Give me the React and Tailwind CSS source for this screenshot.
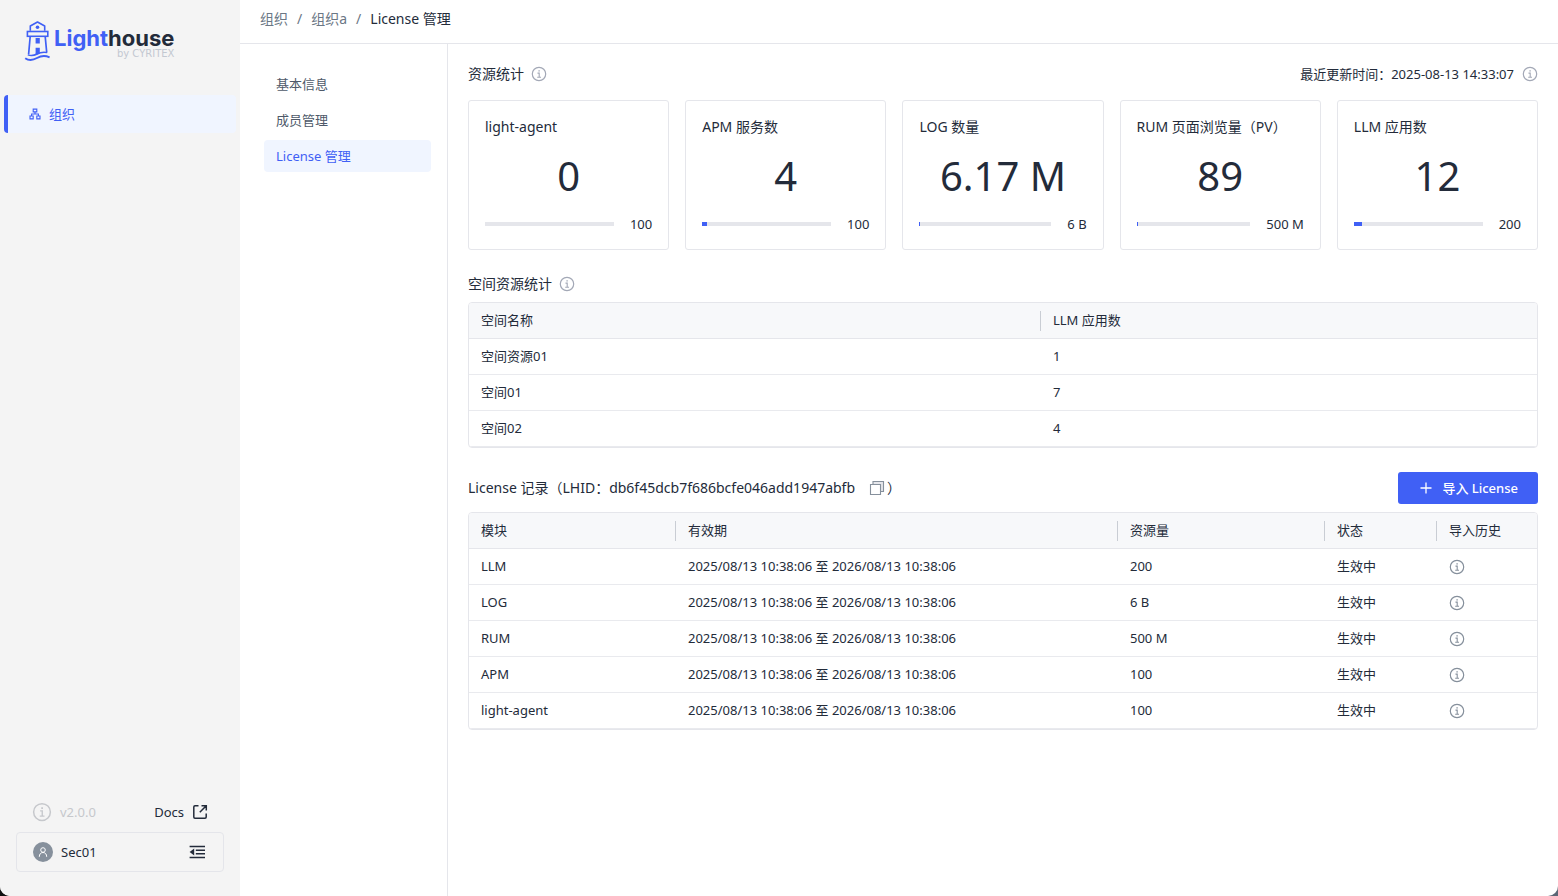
import { Fragment } from 'react';

const STATS = [
  { title: 'light-agent', value: '0', limit: '100', percent: 0 },
  { title: 'APM 服务数', value: '4', limit: '100', percent: 4 },
  { title: 'LOG 数量', value: '6.17 M', limit: '6 B', percent: 0.6 },
  { title: 'RUM 页面浏览量（PV）', value: '89', limit: '500 M', percent: 0.6 },
  { title: 'LLM 应用数', value: '12', limit: '200', percent: 6 },
];

const SPACES = [
  { name: '空间资源01', count: 1 },
  { name: '空间01', count: 7 },
  { name: '空间02', count: 4 },
];

const PERIOD = '2025/08/13 10:38:06 至 2026/08/13 10:38:06';

const LICENSES = [
  { module: 'LLM', amount: '200' },
  { module: 'LOG', amount: '6 B' },
  { module: 'RUM', amount: '500 M' },
  { module: 'APM', amount: '100' },
  { module: 'light-agent', amount: '100' },
];

const SUB_MENU = ['基本信息', '成员管理', 'License 管理'];

const InfoIcon = ({ className }) => (
  <svg viewBox="0 0 16 16" fill="none" stroke="currentColor" className={className} aria-hidden="true">
    <circle cx="8" cy="8" r="6.7" strokeWidth="1.2" />
    <path d="M6.5 7.1h1.7v4.2M6.2 11.3h3.8" strokeWidth="1.1" />
    <path d="M7.4 4.9h1.4" strokeWidth="1.4" />
  </svg>
);

const InfoButton = ({ label, className = 'text-[#a3a8b6]' }) => (
  <button type="button" aria-label={label} className={`block cursor-pointer ${className}`}>
    <InfoIcon className="size-4" />
  </button>
);

const LighthouseMark = () => (
  <svg viewBox="0 0 26 42" fill="none" stroke="#4060f5" className="h-[42px] w-[26px]" aria-hidden="true">
    <path d="M6.3 10.8V6L13.5 2l7.2 4v4.8" strokeWidth="1.6" strokeLinejoin="round" />
    <circle cx="13.5" cy="7.2" r="1.8" fill="#4060f5" stroke="none" />
    <rect x="3.4" y="11.5" width="20.4" height="4.8" strokeWidth="1.6" />
    <path d="M6.2 16.5 4.6 34.3M21.2 16.5l1.5 15.8" strokeWidth="1.7" />
    <path d="M11.6 18h4.2v5.5h-4.2zM11.6 27.8h4.2v5.8l-4.2 1.8z" fill="#4060f5" stroke="none" />
    <path d="M3.8 34.8c3.2 1.2 6.4.6 9.2-.8 3.2-1.6 6.2-2.2 10.2-1.4" strokeWidth="1.4" />
    <path d="M1.2 38.2c3.4 2.4 7.6 2.2 11.8-.2 4-2.3 8-2.7 12.6-.7" strokeWidth="2" />
  </svg>
);

const Logo = () => (
  <div className="flex items-start px-6 pt-5">
    <LighthouseMark />
    <div className="pt-2 pl-1">
      <div className="font-['Inter',sans-serif] text-[22px] leading-5 font-bold text-[#232b3a]">
        <span className="text-[#4060f5]">Light</span>house
      </div>
      <div className="text-right font-['DejaVu_Sans',sans-serif] text-[10px] leading-3 text-[#c3c8d1]">
        by CYRITEX
      </div>
    </div>
  </div>
);

const OrgIcon = () => (
  <svg viewBox="0 0 12 12" fill="none" stroke="currentColor" className="size-3" aria-hidden="true">
    <path d="M4.2 1.1h3.6v2.8H4.2zM1 8h3.2v2.9H1zM7.8 8H11v2.9H7.8zM6 4v2M2.6 8V6h6.8v2" strokeWidth="1.1" />
  </svg>
);

const Sidebar = () => (
  <aside className="flex w-60 shrink-0 flex-col bg-[#f4f4f4]">
    <Logo />
    <nav className="mt-[33px] px-1">
      <a
        href="#org"
        className="flex h-[38px] items-center gap-2 rounded-sm border-l-4 border-[#4060f5] bg-[#f0f5ff] pl-[21px] text-[#4060f5]"
      >
        <OrgIcon />
        组织
      </a>
    </nav>
    <div className="mt-auto px-4 pb-6">
      <div className="flex h-10 items-center justify-between px-4">
        <span className="flex items-center gap-2 text-[#c6c8cc]">
          <InfoIcon className="size-5" />
          v2.0.0
        </span>
        <a href="#docs" className="flex items-center gap-2">
          Docs
          <svg viewBox="0 0 16 16" fill="none" stroke="currentColor" strokeWidth="1.5" className="size-4" aria-hidden="true">
            <path d="M6.5 1.7H3a1.2 1.2 0 0 0-1.2 1.2V13A1.2 1.2 0 0 0 3 14.2h10a1.2 1.2 0 0 0 1.2-1.2V9.5M9.5 1.7h4.8v4.8M14 2 7.8 8.2" />
          </svg>
        </a>
      </div>
      <div className="flex h-10 items-center rounded border border-[#e4e5ea] px-4">
        <span className="flex size-5 items-center justify-center rounded-full bg-[#86909c] text-white">
          <svg viewBox="0 0 12 12" fill="none" stroke="currentColor" strokeWidth="1" className="size-3" aria-hidden="true">
            <circle cx="6" cy="4" r="2.3" />
            <path d="M2.3 10.8c0-2.6 1.5-4.3 3.7-4.3s3.7 1.7 3.7 4.3" />
          </svg>
        </span>
        <span className="ml-2">Sec01</span>
        <button type="button" aria-label="收起菜单" className="ml-auto cursor-pointer">
          <svg viewBox="0 0 18 16" fill="none" stroke="currentColor" strokeWidth="1.6" className="h-4 w-[18px]" aria-hidden="true">
            <path d="M.6 2.5H16M6.8 6.2H16M6.8 9.8H16M.6 13.5H16" />
            <path d="M5.2 4.6v6.8L.6 8z" fill="currentColor" stroke="none" />
          </svg>
        </button>
      </div>
    </div>
  </aside>
);

const StatCard = ({ title, value, limit, percent }) => (
  <div className="rounded-[3px] border border-[#e5e6eb] px-4 pt-4 pb-[15px]">
    <h3 className="text-sm leading-5 whitespace-nowrap">{title}</h3>
    <p className="py-3.5 text-center text-[40px] leading-[49px]">{value}</p>
    <div className="flex items-center gap-4 leading-5">
      <div className="h-1 flex-1 bg-[#e5e6eb]">
        <div className="h-full bg-[#4060f5]" style={{ width: `${percent}%` }} />
      </div>
      <span>{limit}</span>
    </div>
  </div>
);

const HeadCell = ({ children, last, className = '' }) => (
  <th className={`border-b border-[#e5e6eb] p-0 text-left font-normal ${className}`}>
    <div className={`h-5 pl-3 leading-[18px] ${last ? '' : 'border-r border-[#c9cdd4]'}`}>{children}</div>
  </th>
);

const Cell = ({ children, className = 'pb-px' }) => (
  <td className={`border-b border-[#e9eaee] pt-0 pr-0 pl-3 ${className}`}>{children}</td>
);

const TableFrame = ({ children }) => (
  <div className="overflow-hidden rounded border border-[#e5e6eb]">
    <table className="w-full table-fixed border-separate border-spacing-0">{children}</table>
  </div>
);

const Main = () => (
  <main className="min-w-0 flex-1 p-5">
    <div className="mb-4 flex h-5 items-center justify-between">
      <h2 className="flex items-center gap-[7px] text-sm leading-5">
        资源统计
        <InfoButton label="资源统计说明" />
      </h2>
      <span className="flex items-center gap-2">
        最近更新时间：2025-08-13 14:33:07
        <InfoButton label="更新时间说明" />
      </span>
    </div>
    <div className="grid grid-cols-5 gap-4">
      {STATS.map((stat) => (
        <StatCard key={stat.title} {...stat} />
      ))}
    </div>

    <h2 className="mt-6 mb-2 flex items-center gap-[7px] text-sm leading-5">
      空间资源统计
      <InfoButton label="空间资源统计说明" />
    </h2>
    <TableFrame>
      <thead>
        <tr className="h-9 bg-[#f7f8fa]">
          <HeadCell className="w-[572px]">空间名称</HeadCell>
          <HeadCell last>LLM 应用数</HeadCell>
        </tr>
      </thead>
      <tbody>
        {SPACES.map((space) => (
          <tr key={space.name} className="h-9">
            <Cell>{space.name}</Cell>
            <Cell>{space.count}</Cell>
          </tr>
        ))}
      </tbody>
    </TableFrame>

    <div className="mt-6 mb-2 flex items-center justify-between">
      <h2 className="flex items-center text-sm leading-5">
        License 记录（LHID：db6f45dcb7f686bcfe046add1947abfb
        <button type="button" aria-label="复制 LHID" className="mr-0.5 ml-3.5 cursor-pointer text-[#86909c]">
          <svg viewBox="0 0 16 16" fill="none" stroke="currentColor" strokeWidth="1.1" className="size-4" aria-hidden="true">
            <path d="M4 4.5V1.5h10.5v10h-3" fill="#e5e6eb" />
            <path d="M1.5 4.5h10v10h-10z" fill="#fff" />
          </svg>
        </button>
        ）
      </h2>
      <button
        type="button"
        className="flex h-8 cursor-pointer items-center gap-2 rounded-[3px] bg-[#4060f5] px-5 font-medium text-white"
      >
        <svg viewBox="0 0 16 16" stroke="currentColor" strokeWidth="1.3" className="size-4" aria-hidden="true">
          <path d="M8 2.5v11M2.5 8h11" />
        </svg>
        导入 License
      </button>
    </div>
    <TableFrame>
      <thead>
        <tr className="h-9 bg-[#f7f8fa]">
          <HeadCell className="w-[207px]">模块</HeadCell>
          <HeadCell>有效期</HeadCell>
          <HeadCell className="w-[207px]">资源量</HeadCell>
          <HeadCell className="w-28">状态</HeadCell>
          <HeadCell last className="w-[100px]">
            导入历史
          </HeadCell>
        </tr>
      </thead>
      <tbody>
        {LICENSES.map(({ module, amount }) => (
          <tr key={module} className="h-9">
            <Cell>{module}</Cell>
            <Cell>{PERIOD}</Cell>
            <Cell>{amount}</Cell>
            <Cell>生效中</Cell>
            <Cell className="pb-0">
              <InfoButton label={`${module} 导入历史`} className="text-[#86909c]" />
            </Cell>
          </tr>
        ))}
      </tbody>
    </TableFrame>
  </main>
);

const Breadcrumb = () => (
  <header className="flex h-11 items-center gap-[9px] border-b border-[#e5e6eb] px-5 pb-1.5 text-sm text-[#6b7785]">
    {['组织', '组织a'].map((name) => (
      <Fragment key={name}>
        <a href="#org">{name}</a>
        <span>/</span>
      </Fragment>
    ))}
    <span className="text-[#232b3a]">License 管理</span>
  </header>
);

const App = () => (
  <div className="bg-linear-to-r from-[#111] to-[#5b6675] font-['Noto_Sans','Noto_Sans_CJK_SC',sans-serif] text-[13px] leading-5 text-[#232b3a]">
    <div className="flex min-h-screen overflow-hidden rounded-b-[10px] bg-white">
      <Sidebar />
      <div className="flex min-w-0 flex-1 flex-col">
        <Breadcrumb />
        <div className="flex flex-1">
          <nav className="flex w-52 shrink-0 flex-col gap-1 border-r border-[#e5e6eb] py-6 pr-4 pl-6">
            {SUB_MENU.map((name, i) => (
              <a
                key={name}
                href={`#menu-${i}`}
                className={`flex h-8 items-center rounded px-3 ${
                  i === 2 ? 'bg-[#f0f5ff] text-[#4060f5]' : 'text-[#4e5969]'
                }`}
              >
                {name}
              </a>
            ))}
          </nav>
          <Main />
        </div>
      </div>
    </div>
  </div>
);

export default App;
